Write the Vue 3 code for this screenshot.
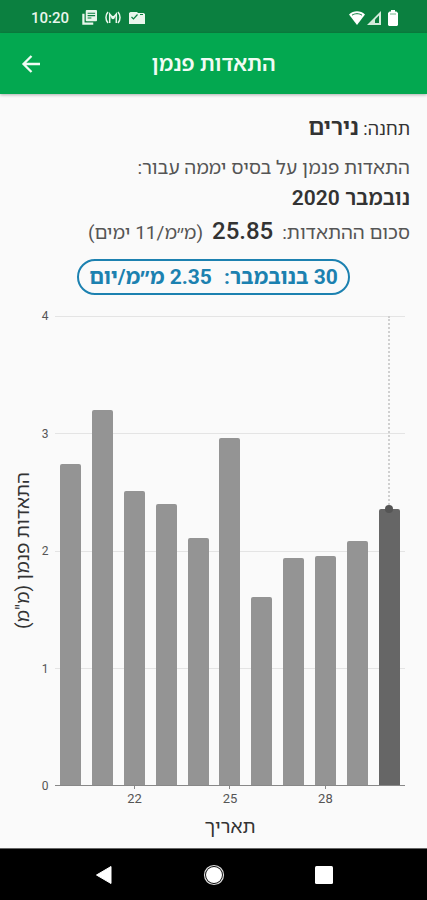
<script setup>
import { computed, ref } from "vue";

const maxValue = 4;
const ticks = [4, 3, 2, 1, 0];

const days = ref([
  { day: 20, value: 2.74 },
  { day: 21, value: 3.2 },
  { day: 22, value: 2.51 },
  { day: 23, value: 2.4 },
  { day: 24, value: 2.11 },
  { day: 25, value: 2.96 },
  { day: 26, value: 1.6 },
  { day: 27, value: 1.94 },
  { day: 28, value: 1.95 },
  { day: 29, value: 2.08 },
  { day: 30, value: 2.35 },
]);

const labeled = [22, 25, 28];
const selectedDay = ref(30);
const selected = computed(() =>
  days.value.find((d) => d.day === selectedDay.value)
);
const barHeight = (value) => (value / maxValue) * 100 + "%";
</script>

<template>
  <div class="screen">
    <!-- status bar -->
    <div class="status">
      <span class="clock">10:20</span>
      <svg class="note" width="15" height="15" viewBox="0 0 16 16">
        <path d="M1.5 4v10.5H12" fill="none" stroke="#e9f6ec" stroke-width="2.4" />
        <rect x="4" y="0" width="12" height="12" rx="1" fill="#e9f6ec" />
        <path d="M6 3.5h8M6 6h8M6 8.5h4" stroke="#0b8040" stroke-width="1.2" />
      </svg>
      <svg class="note" width="16" height="13" viewBox="0 0 16 13">
        <g fill="none" stroke="#e9f6ec" stroke-width="1.5">
          <path d="M3 1C.3 4 .3 9 3 12M13 1c2.700 3 2.700 8 0 11" />
          <path d="M4.700 12V3L8 7l3.300-4v9" />
        </g>
        <circle cx="8" cy="6.500" r="1.800" fill="#e9f6ec" />
      </svg>
      <svg class="note" width="16" height="14" viewBox="0 0 16 14">
        <path d="M1.500 1H8l1 1h5.500L16 3v10H0V2z" fill="#e9f6ec" />
        <path d="M2.500 6l2 2 4-4.500M11 3.500h3" fill="none" stroke="#0b8040" stroke-width="1.200" />
      </svg>
      <svg class="wifi" width="16" height="14" viewBox="0 0 16 14">
        <path d="M8 14L0 3.500C4.500-.8 11.500-.8 16 3.500z" fill="#fff" />
        <path d="M3 4.200c3-2 7-2 10 0" fill="none" stroke="#0b8040" stroke-width="1" />
      </svg>
      <svg class="signal" width="14" height="14" viewBox="0 0 14 14">
        <path d="M0 14L14 0v14z" fill="#d5ecdc" />
        <path d="M8 8.500l4-4V12H8z" fill="#0b8040" />
      </svg>
      <svg width="10" height="16" viewBox="0 0 10 16">
        <path d="M3 0h4v1.500h1.500L10 3v12l-1 1H1l-1-1V3l1.500-1.500H3z" fill="#fff" />
        <path d="M2 4h6" stroke="#6fb58a" stroke-width="1" />
      </svg>
    </div>

    <header class="appbar">
      <button class="back" aria-label="חזרה">
        <svg width="20" height="20" viewBox="0 0 20 20">
          <path d="M19 10H3M10.500 2L2.500 10l8 8" fill="none" stroke="#f0fbf3" stroke-width="2.300" />
        </svg>
      </button>
      <h1>התאדות פנמן</h1>
    </header>

    <main dir="rtl">
      <section class="info">
        <p class="station">תחנה: <b>נירים</b></p>
        <p class="basis">התאדות פנמן על בסיס יממה עבור:</p>
        <p class="month">נובמבר 2020</p>
        <p class="sum">
          <span>סכום ההתאדות:</span>
          <b>25.85</b>
          <span>(מ״מ/11 ימים)</span>
        </p>
      </section>
      <div class="badge">
        <span>{{ selected.day }} בנובמבר:</span>
        <span>{{ selected.value }} מ״מ/יום</span>
      </div>

      <!-- chart -->
      <div class="chart" dir="ltr">
        <div class="ytitle" dir="rtl">התאדות פנמן (מ"מ)</div>
        <div class="yaxis">
          <span v-for="t in ticks" :key="t">{{ t }}</span>
        </div>
        <div class="plot">
          <div class="lines">
            <i v-for="t in maxValue" :key="t"></i>
          </div>
          <div class="bars">
            <div
              v-for="d in days"
              :key="d.day"
              class="col"
              :class="{ active: d.day === selectedDay }"
              @click="selectedDay = d.day"
            >
              <div class="bar" :style="{ height: barHeight(d.value) }"></div>
            </div>
          </div>
        </div>
        <div class="xaxis">
          <span
            v-for="d in days"
            :key="d.day"
            :class="{ tick: labeled.includes(d.day) }"
            >{{ labeled.includes(d.day) ? d.day : "" }}</span
          >
        </div>
        <div class="xtitle" dir="rtl">תאריך</div>
      </div>
    </main>

    <!-- system navigation -->
    <nav class="sysnav">
      <button aria-label="Back">
        <svg width="18" height="20" viewBox="0 0 18 20">
          <path d="M16 1.500v17L1.500 10z" fill="#fff" stroke="#fff" stroke-linejoin="round" />
        </svg>
      </button>
      <button aria-label="Home">
        <svg width="22" height="22" viewBox="0 0 22 22">
          <circle cx="11" cy="11" r="9.500" fill="none" stroke="#ddd" stroke-width="1.200" />
          <circle cx="11" cy="11" r="8" fill="#fff" />
        </svg>
      </button>
      <button aria-label="Recents">
        <svg width="18" height="18" viewBox="0 0 18 18">
          <rect width="18" height="18" rx="1.500" fill="#fff" />
        </svg>
      </button>
    </nav>
  </div>
</template>

<style>
body {
  margin: 0;
  background: #fafafa;
}
</style>

<style scoped>
.screen {
  display: flex;
  flex-direction: column;
  min-height: 100vh;
  font-family: Roboto, "Noto Sans Hebrew", "Open Sans", "Noto Sans", sans-serif;
  color: #333;
}
button {
  display: flex;
  padding: 0;
  border: none;
  background: none;
  cursor: pointer;
}
.status {
  display: flex;
  align-items: center;
  height: 33px;
  padding: 2px 29px 0 31px;
  box-sizing: border-box;
  background: #0b8040;
}
.clock {
  margin-right: 13px;
  font-size: 15px;
  font-weight: 500;
  color: #e9f6ec;
}
.note {
  margin-right: 8px;
}
.wifi {
  margin-left: auto;
}
.signal {
  margin: 0 7px 0 2px;
}
.appbar {
  display: grid;
  grid-template-columns: 20px 1fr 20px;
  align-items: center;
  height: 61px;
  padding: 0 21px;
  background: #03a850;
  box-shadow: 0 1px 3px rgba(0, 0, 0, 0.3);
}
.appbar h1 {
  margin: 0;
  font-size: 21px;
  line-height: 24px;
  font-weight: 600;
  text-align: center;
  color: #f0fbf3;
}
main {
  display: flex;
  flex-direction: column;
  flex: 1;
}
.info {
  padding: 20px 17px 0;
}
.info p {
  margin: 0;
  font-size: 19px;
  line-height: 30px;
}
.info .station {
  margin-bottom: 9px;
  font-size: 18px;
}
.station b {
  font-size: 23px;
  line-height: 24px;
  font-weight: 600;
}
.info .month {
  font-size: 21px;
  font-weight: 600;
}
.basis,
.sum {
  color: #555;
}
.info .sum {
  display: flex;
  align-items: baseline;
  gap: 9px;
  line-height: 36px;
}
.sum b {
  font-size: 24px;
  font-weight: 500;
  color: #333;
}
.badge {
  display: flex;
  align-self: center;
  gap: 12px;
  margin-top: 8px;
  padding: 0 10px;
  border: 2px solid #1c81b0;
  border-radius: 18px;
  font-size: 21px;
  line-height: 32px;
  font-weight: 700;
  color: #1c81b0;
}
.chart {
  display: grid;
  grid-template-columns: 24px 12px 1fr;
  column-gap: 4px;
  padding: 21px 22px 0 11px;
}
.ytitle {
  justify-self: center;
  align-self: center;
  writing-mode: vertical-rl;
  transform: rotate(180deg);
  font-size: 19px;
  line-height: 24px;
}
.yaxis {
  display: flex;
  flex-direction: column;
  justify-content: space-between;
  margin: -8px 0;
  font-size: 12px;
  line-height: 16px;
  text-align: center;
  color: #555;
}
.plot {
  display: grid;
  height: 469px;
  border-bottom: 1px solid #888;
}
.lines,
.bars {
  grid-area: 1 / 1;
  display: flex;
}
.lines {
  flex-direction: column;
}
.lines i {
  flex: 1;
  border-top: 1px solid #e4e4e4;
}
.col {
  display: flex;
  flex: 1;
  flex-direction: column;
  align-items: center;
  justify-content: flex-end;
}
.bar {
  width: 66%;
  border-radius: 2px 2px 0 0;
  background: #949494;
}
.active .bar {
  background: #666;
}
.active::before {
  content: "";
  flex: 1;
  border-left: 2px dotted #d0d0d0;
}
/* marker on top of the selected bar */
.active .bar::before {
  content: "";
  display: block;
  width: 8px;
  height: 8px;
  margin: -4px auto 0;
  border-radius: 50%;
  background: #555;
}
.xaxis {
  grid-column: 3;
  display: flex;
  height: 26px;
  font-size: 13px;
  line-height: 20px;
  text-align: center;
  color: #555;
}
.xaxis span {
  flex: 1;
}
.tick::before {
  content: "";
  display: block;
  width: 1px;
  height: 3px;
  margin: 0 auto;
  background: #888;
}
.xtitle {
  grid-column: 3;
  font-size: 19px;
  line-height: 30px;
  text-align: center;
}
.sysnav {
  display: flex;
  justify-content: center;
  align-items: center;
  gap: 90px;
  height: 51px;
  border-top: 1px solid #666;
  background: #000;
}
</style>
